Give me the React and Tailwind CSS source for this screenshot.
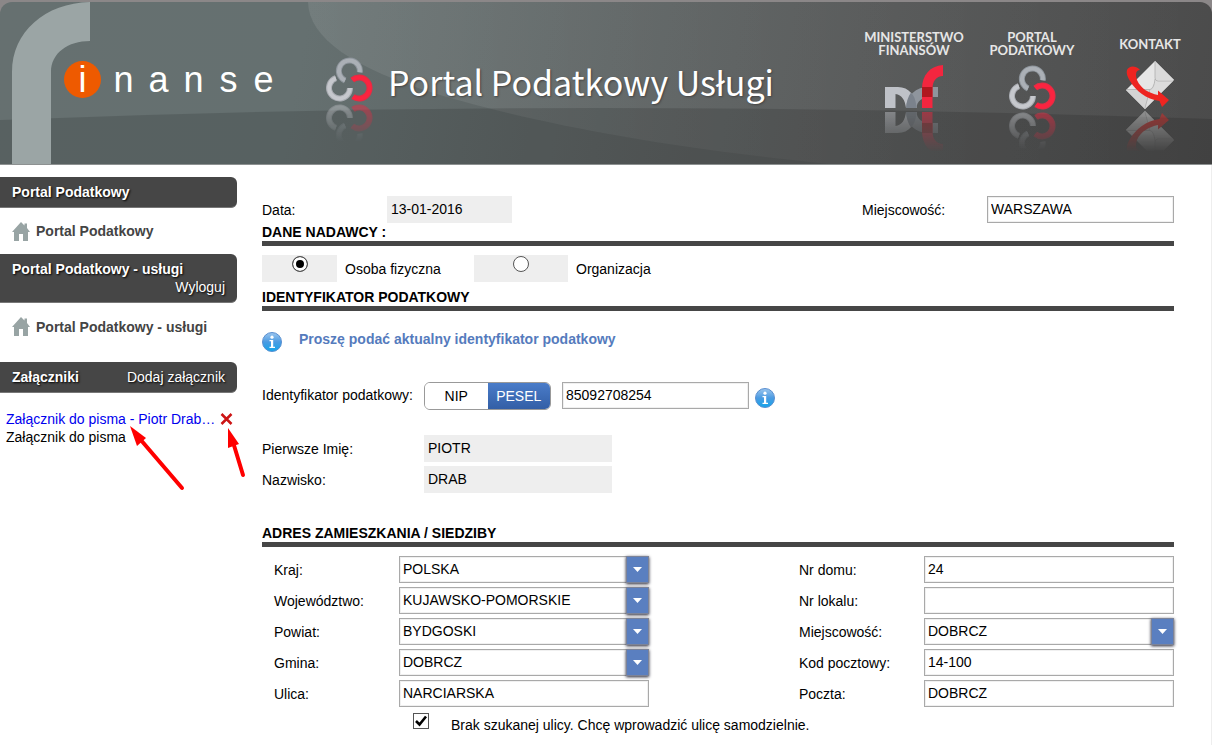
import { useState } from "react";

const FADE = "linear-gradient(to bottom, rgba(0,0,0,0.5), transparent 85%)";

function Reflected({ width, height, className = "", children }) {
  return (
    <span className={`block shrink-0 ${className}`} aria-hidden="true">
      <svg width={width} height={height} viewBox={`0 0 ${width} ${height}`} className="block">
        {children}
      </svg>
      <svg
        width={width}
        height={height}
        viewBox={`0 0 ${width} ${height}`}
        className="block"
        style={{ maskImage: FADE, WebkitMaskImage: FADE }}
      >
        <g transform={`matrix(1 0 0 -1 0 ${height})`}>{children}</g>
      </svg>
    </span>
  );
}

function KnotShape() {
  return (
    <g fill="none">
      <path d="M9.9 21.1A10.5 10.5 0 1 0 24 31" stroke="#a9acb2" strokeWidth="6" />
      <path d="M9.9 21.1A10.5 10.5 0 1 0 24 31" stroke="#c6c8cd" strokeWidth="4" />
      <path d="M33.8 15.3A10.5 10.5 0 1 0 19.1 23.5" stroke="#8e959c" strokeWidth="6" />
      <path d="M33.8 15.3A10.5 10.5 0 1 0 19.1 23.5" stroke="#abb0b6" strokeWidth="4" />
      <path d="M26.3 23A10.5 10.5 0 1 1 27 39.6" stroke="#e02e44" strokeWidth="6" />
      <path d="M26.3 23A10.5 10.5 0 1 1 27 39.6" stroke="#fb2440" strokeWidth="4" />
    </g>
  );
}

function MfShape() {
  return (
    <g>
      <path d="M0 26H13C24 26 31 35 31.500 47H21C20 39 17 34 10.500 33V47H0Z" fill="#bfc2c8" />
      <path d="M21 47C22 34 31 26 43 26H53V36H45C37 36 32 40 31.500 47Z" fill="#8f959d" />
      <path d="M26 31.500C30 36 31 41 31.500 47H21C21.500 41 23 35.500 26 31.500Z" fill="#7b828c" />
      <path d="M58 4C45 5 37 14 37 28V47H47.500V28C47.500 20 51 15.500 58 15Z" fill="#f3263f" />
      <path d="M37 26H47.500V36H37Z" fill="#b0171f" />
    </g>
  );
}

function EnvelopeShape() {
  return (
    <g>
      <path d="M31 0L50 19L21 48L2 29Z" fill="#e6e6e6" />
      <path d="M31 0L50 19H31Z" fill="#dadada" />
      <path d="M27 28L31 20H49L21 48Z" fill="#dcdcdc" />
      <path d="M2 29L26 28.500L21 48Z" fill="#d4d4d4" />
      <path d="M31 1V17Q31 20 34 20H49M31 18Q30 28 26 28.500H3M26 28.500L21 47" fill="none" stroke="#adadad" strokeWidth="0.8" />
      <path d="M3 9C5 5 11 4 16 9C12 9 11 13 13 19C17 28 25 32 34 34V29.500L45 39L38 46L35.500 40C22 38 12 30 6 20C3.500 16 2 12 3 9Z" fill="#ee2420" />
    </g>
  );
}

function InfoIcon() {
  return (
    <svg width="20" height="20" viewBox="0 0 20 20" className="block shrink-0" aria-hidden="true">
      <defs>
        <linearGradient id="info-fill" x1="0" y1="0" x2="0" y2="1">
          <stop offset="0" stopColor="#9cc6ee" />
          <stop offset="0.5" stopColor="#4b9be2" />
          <stop offset="1" stopColor="#12a5ea" />
        </linearGradient>
      </defs>
      <circle cx="10" cy="10" r="9.500" fill="url(#info-fill)" stroke="#5a8fd0" />
      <circle cx="10" cy="5.200" r="1.600" fill="#fff" />
      <path d="M7.500 8H11.200V14.800H13V16H7.500V14.800H9V9.300H7.500Z" fill="#fff" />
    </svg>
  );
}

function HouseIcon() {
  return (
    <svg width="18" height="19" viewBox="0 0 18 19" className="block shrink-0" aria-hidden="true">
      <path d="M9 0L12.500 3.500V1.500H15V6L18 10H16V19H11V12H7V19H2V10H0Z" fill="#98a4a4" />
    </svg>
  );
}

function SideBar({ title, children }) {
  return (
    <div className="rounded-r-md border-b border-[#777] bg-[#464646] px-3 py-1.5 text-white [text-shadow:1px_1px_2px_#000]">
      <div className="flex justify-between">
        <h2 className="font-bold">{title}</h2>
        {children}
      </div>
    </div>
  );
}

function SideLink({ children }) {
  return (
    <a href="#portal" className="flex items-center gap-1.5 pl-3 font-bold text-[#444]">
      <HouseIcon />
      {children}
    </a>
  );
}

function Heading({ children, className = "" }) {
  return (
    <h2 className={`border-b-[5px] border-[#464646] leading-[18px] font-bold ${className}`}>{children}</h2>
  );
}

const box = "h-[27px] w-full min-w-0 rounded-none border border-[#a9a9a9] bg-white pb-0.5 pl-[3px] shadow-[inset_0_0_0_1px_#f0f0f0] outline-none";
const grey = "h-[27px] min-w-0 bg-[#eee] pb-0.5 pl-1 outline-none";

function TextRow({ id, label, value }) {
  return (
    <div className="grid grid-cols-[1fr_2fr] items-center">
      <label htmlFor={id}>{label}</label>
      <input id={id} defaultValue={value} className={box} />
    </div>
  );
}

function SelectRow({ id, label, value }) {
  return (
    <div className="grid grid-cols-[1fr_2fr] items-center">
      <label htmlFor={id}>{label}</label>
      <div className="relative">
        <select id={id} className={`${box} block appearance-none`}>
          <option>{value}</option>
        </select>
        <span className="pointer-events-none absolute inset-y-0 right-0 flex w-[23px] items-center justify-center border border-[#7c8398] bg-[#5a7fc0] shadow-[0_1px_3px_#223]">
          <svg width="9" height="5" viewBox="0 0 9 5" aria-hidden="true">
            <path d="M0 0H9L4.500 5Z" fill="#fff" />
          </svg>
        </span>
      </div>
    </div>
  );
}

function NavItem({ lines, children }) {
  return (
    <a href="#menu" className="flex w-[118px] flex-col items-center text-center text-[13px] leading-[13px] font-bold text-[#e6e6e6]">
      <span className="mb-1 flex h-[26px] flex-col justify-center">
        {lines.map((line) => (
          <span key={line}>{line}</span>
        ))}
      </span>
      {children}
    </a>
  );
}

function Header() {
  return (
    <div className="bg-[#8b8788] pt-0.5">
      <header className="relative h-[163px] overflow-hidden rounded-t-xl border-b border-[#8d9191] bg-[linear-gradient(100deg,#667070_0%,#657070_25%,#5c6262_50%,#565858_70%,#4b4b4b_100%)]">
        <svg className="absolute inset-0 h-full w-full" viewBox="0 0 1212 162" preserveAspectRatio="none" aria-hidden="true">
          <defs>
            <linearGradient id="wave" x1="0" y1="0" x2="1" y2="0">
              <stop offset="0" stopColor="#fff" stopOpacity="0.09" />
              <stop offset="0.600" stopColor="#fff" stopOpacity="0.03" />
              <stop offset="1" stopColor="#fff" stopOpacity="0" />
            </linearGradient>
          </defs>
          <path d="M308 0C309 36 352 66 440 93C540 122 660 145 830 162H1212V0Z" fill="url(#wave)" />
          <path d="M0 118Q300 106 600 106T1212 117V162H0Z" fill="#000" fillOpacity="0.13" />
        </svg>
        <svg className="absolute top-0 left-0" width="91" height="162" viewBox="0 0 91 162" aria-hidden="true">
          <path d="M90 0C45 1 12 30 12 70V162H51V70C51 51 68 39 90 39Z" fill="#9ba5a5" />
        </svg>
        <div className="relative flex items-start text-white">
          <div className="mt-[59px] ml-16 flex shrink-0 items-center text-[36px] leading-9">
            <span className="mr-[5px] flex size-[37px] items-center justify-center rounded-full bg-[#ee5a00]">i</span>
            <span className="w-[35px] text-center">n</span>
            <span className="w-[35px] text-center">a</span>
            <span className="w-[35px] text-center">n</span>
            <span className="w-[35px] text-center">s</span>
            <span className="w-[35px] text-center">e</span>
          </div>
          <Reflected width={47} height={46} className="mt-[55px] ml-[45px]">
            <KnotShape />
          </Reflected>
          <h1 className="mt-[54px] ml-[15px] font-['Noto_Sans_CJK_SC','Noto_Sans',sans-serif] text-[34px] leading-[52px] whitespace-nowrap [text-shadow:1px_1px_2px_#444]">
            Portal Podatkowy Usługi
          </h1>
          <nav className="mt-[29px] mr-[3px] ml-auto flex shrink-0 font-['Lato',sans-serif]">
            <NavItem lines={["MINISTERSTWO", "FINANSÓW"]}>
              <Reflected width={58} height={49}>
                <MfShape />
              </Reflected>
            </NavItem>
            <NavItem lines={["PORTAL", "PODATKOWY"]}>
              <Reflected width={47} height={46} className="mt-1">
                <KnotShape />
              </Reflected>
            </NavItem>
            <NavItem lines={["KONTAKT"]}>
              <Reflected width={52} height={49}>
                <EnvelopeShape />
              </Reflected>
            </NavItem>
          </nav>
        </div>
      </header>
    </div>
  );
}

function Sidebar() {
  return (
    <aside className="w-[237px] shrink-0 pt-3 leading-[18px]">
      <SideBar title="Portal Podatkowy" />
      <div className="flex h-[46px] items-center">
        <SideLink>Portal Podatkowy</SideLink>
      </div>
      <div className="rounded-r-md border-b border-[#777] bg-[#464646] px-3 py-1.5 text-white [text-shadow:1px_1px_2px_#000]">
        <h2 className="font-bold">Portal Podatkowy - usługi</h2>
        <a href="#wyloguj" className="block text-right">Wyloguj</a>
      </div>
      <div className="mb-3 flex h-[47px] items-center">
        <SideLink>Portal Podatkowy - usługi</SideLink>
      </div>
      <SideBar title="Załączniki">
        <a href="#dodaj">Dodaj załącznik</a>
      </SideBar>
      <div className="relative mt-[17px] pl-1.5">
        <div className="flex items-center">
          <a href="#zalacznik" className="text-[#0000ee]">Załącznik do pisma - Piotr Drab…</a>
          <button type="button" aria-label="Usuń załącznik" className="mr-1 ml-auto">
            <svg width="13" height="12" viewBox="0 0 13 12" className="block" aria-hidden="true">
              <path d="M1.500 1L11.500 11M11.500 1L1.500 11" stroke="#cc1414" strokeWidth="2.500" />
            </svg>
          </button>
        </div>
        <p>Załącznik do pisma</p>
        <svg className="absolute top-4 left-[128px]" width="120" height="66" viewBox="0 0 120 66" fill="#f00" stroke="#f00" aria-hidden="true">
          <path d="M12 13L54 62" strokeWidth="4" strokeLinecap="round" />
          <path d="M2 0L18 12L9 20Z" stroke="none" />
          <path d="M105 16L115 49" strokeWidth="4" strokeLinecap="round" />
          <path d="M100 2L111 18L100 22Z" stroke="none" />
        </svg>
      </div>
    </aside>
  );
}

function Form() {
  const [kind, setKind] = useState("osoba");
  const [idType, setIdType] = useState("PESEL");
  const [manual, setManual] = useState(true);
  const radio = "mt-px size-4 appearance-none rounded-full border border-[#555] bg-white checked:bg-black checked:shadow-[inset_0_0_0_3px_white]";

  return (
    <form className="min-w-0 flex-1 pt-[31px] pr-[37px] pl-[25px]">
      <div className="flex items-center justify-between">
        <div className="flex items-center">
          <label htmlFor="data" className="w-[125px]">Data:</label>
          <input id="data" readOnly value="13-01-2016" className={`${grey} w-[125px]`} />
        </div>
        <div className="flex items-center">
          <label htmlFor="miasto" className="w-[125px]">Miejscowość:</label>
          <div className="w-[187px]">
            <input id="miasto" defaultValue="WARSZAWA" className={box} />
          </div>
        </div>
      </div>

      <Heading>DANE NADAWCY :</Heading>
      <div className="mt-[9px] flex h-[27px] items-center">
        <div className="flex h-full w-[75px] justify-center bg-[#eee]">
          <input id="osoba" type="radio" name="kind" checked={kind === "osoba"} onChange={() => setKind("osoba")} className={radio} />
        </div>
        <label htmlFor="osoba" className="w-[137px] pl-2">Osoba fizyczna</label>
        <div className="flex h-full w-[94px] justify-center bg-[#eee]">
          <input id="organizacja" type="radio" name="kind" checked={kind === "organizacja"} onChange={() => setKind("organizacja")} className={radio} />
        </div>
        <label htmlFor="organizacja" className="pl-2">Organizacja</label>
      </div>

      <Heading className="mt-1.5">IDENTYFIKATOR PODATKOWY</Heading>
      <div className="mt-5 flex gap-[17px]">
        <div className="pt-px">
          <InfoIcon />
        </div>
        <p className="leading-4 font-bold text-[#557bbd]">Proszę podać aktualny identyfikator podatkowy</p>
      </div>

      <div className="mt-[30px] flex">
        <label htmlFor="identyfikator" className="w-[162px] pt-1">Identyfikator podatkowy:</label>
        <div className="flex h-7 w-[127px] overflow-hidden rounded-md border border-[#999]">
          {["NIP", "PESEL"].map((type) => (
            <button
              key={type}
              type="button"
              aria-pressed={idType === type}
              onClick={() => setIdType(type)}
              className={idType === type ? "flex-1 bg-linear-to-b from-[#4a7cc9] to-[#335fa6] text-white" : "flex-1 bg-white"}
            >
              {type}
            </button>
          ))}
        </div>
        <div className="ml-[11px] w-[187px]">
          <input id="identyfikator" defaultValue="85092708254" className={box} />
        </div>
        <div className="pt-1.5 pl-1.5">
          <InfoIcon />
        </div>
      </div>

      <div className="mt-[25px] flex flex-col gap-1">
        <div className="flex items-center">
          <label htmlFor="imie" className="w-[162px]">Pierwsze Imię:</label>
          <input id="imie" readOnly value="PIOTR" className={`${grey} w-[188px]`} />
        </div>
        <div className="flex items-center">
          <label htmlFor="nazwisko" className="w-[162px]">Nazwisko:</label>
          <input id="nazwisko" readOnly value="DRAB" className={`${grey} w-[188px]`} />
        </div>
      </div>

      <Heading className="mt-[31px]">ADRES ZAMIESZKANIA / SIEDZIBY</Heading>
      <div className="mt-[9px] grid grid-cols-2 gap-x-[150px] pl-3">
        <div className="flex flex-col gap-1">
          <SelectRow id="kraj" label="Kraj:" value="POLSKA" />
          <SelectRow id="wojewodztwo" label="Województwo:" value="KUJAWSKO-POMORSKIE" />
          <SelectRow id="powiat" label="Powiat:" value="BYDGOSKI" />
          <SelectRow id="gmina" label="Gmina:" value="DOBRCZ" />
          <TextRow id="ulica" label="Ulica:" value="NARCIARSKA" />
        </div>
        <div className="flex flex-col gap-1">
          <TextRow id="dom" label="Nr domu:" value="24" />
          <TextRow id="lokal" label="Nr lokalu:" value="" />
          <SelectRow id="miejscowosc" label="Miejscowość:" value="DOBRCZ" />
          <TextRow id="kod" label="Kod pocztowy:" value="14-100" />
          <TextRow id="poczta" label="Poczta:" value="DOBRCZ" />
        </div>
      </div>
      <div className="mt-1.5 flex pl-[151px]">
        <span className="relative size-4">
          <input id="brak" type="checkbox" checked={manual} onChange={(e) => setManual(e.target.checked)} className="block size-4 appearance-none border border-[#555] bg-white" />
          {manual && (
            <svg className="pointer-events-none absolute inset-0" width="16" height="16" viewBox="0 0 16 16" aria-hidden="true">
              <path d="M3 8L6.500 11.500L13 3.500" fill="none" stroke="#000" strokeWidth="2.600" />
            </svg>
          )}
        </span>
        <label htmlFor="brak" className="pt-[3px] pl-[22px]">Brak szukanej ulicy. Chcę wprowadzić ulicę samodzielnie.</label>
      </div>
    </form>
  );
}

export default function App() {
  return (
    <div className="flex min-h-screen flex-col bg-white font-['Liberation_Sans',Arial,sans-serif] text-[14px] leading-[18px] text-black">
      <Header />
      <div className="flex flex-1 border-r border-[#eee]">
        <Sidebar />
        <Form />
      </div>
    </div>
  );
}
